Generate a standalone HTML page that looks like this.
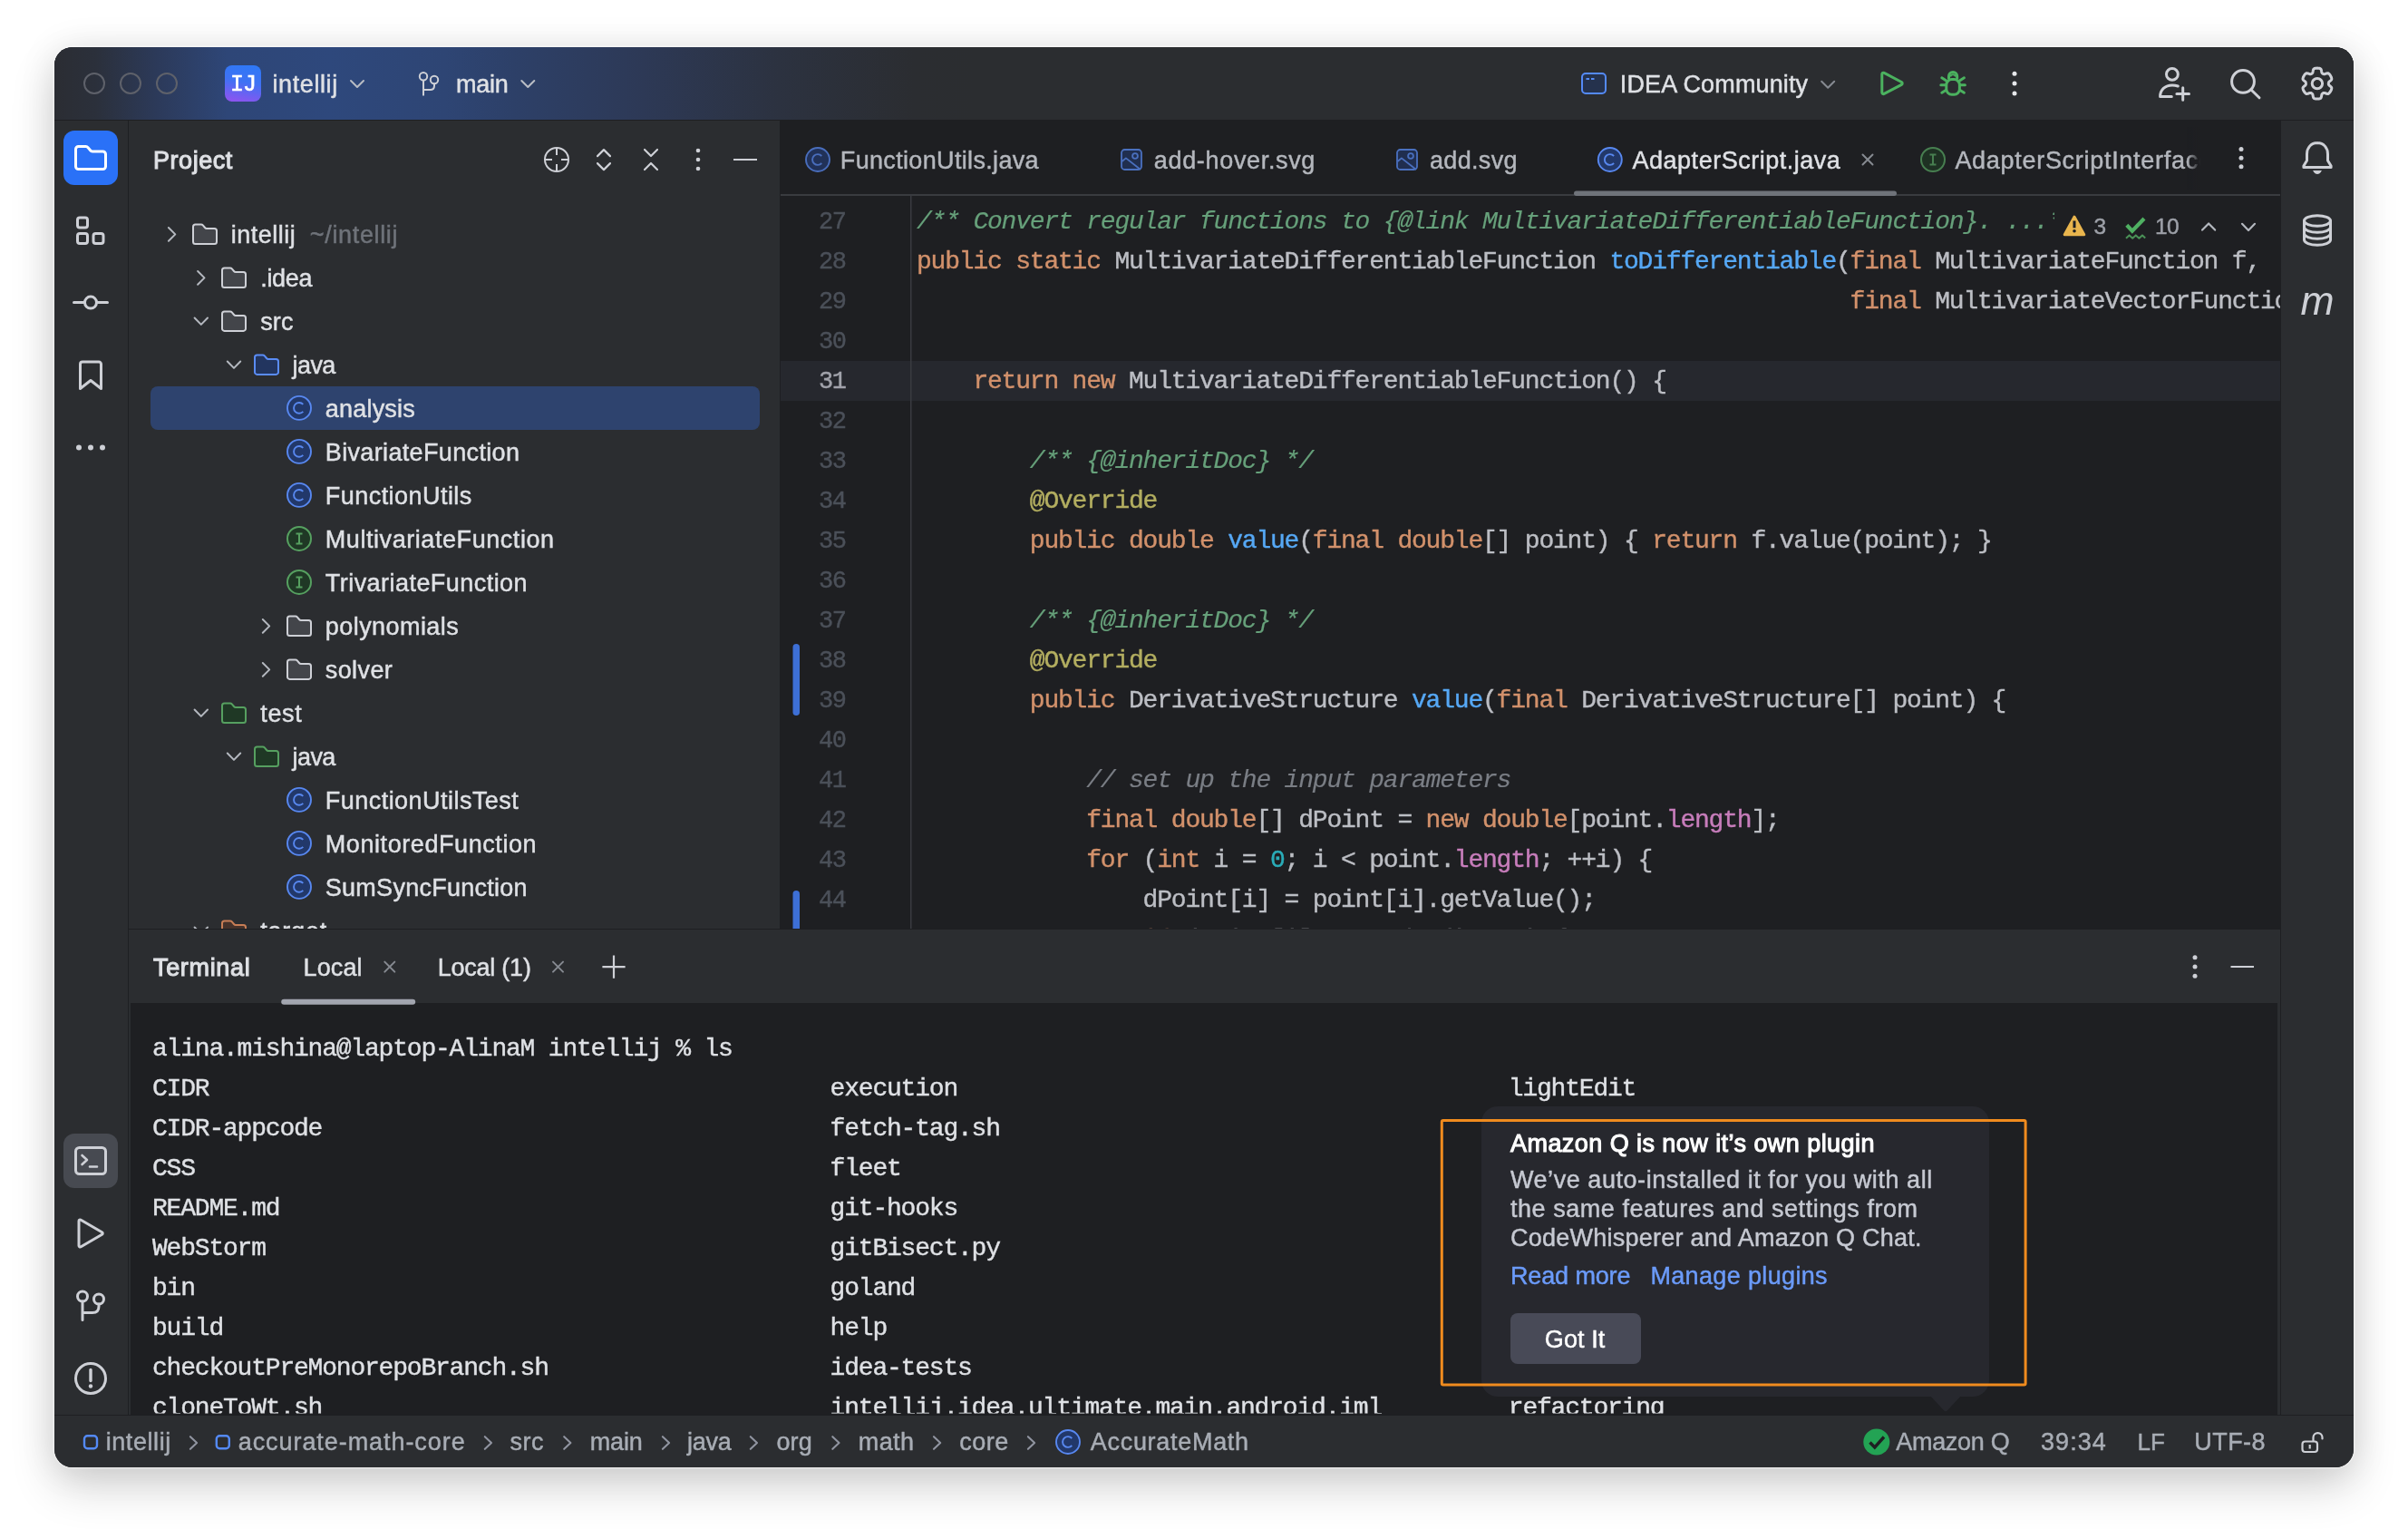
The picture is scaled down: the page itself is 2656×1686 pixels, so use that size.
<!DOCTYPE html>
<html lang="en"><head><meta charset="utf-8"><title>intellij – AdapterScript.java</title>
<style>
html,body{margin:0;padding:0;background:#ffffff;}
body{width:2656px;height:1686px;position:relative;overflow:hidden;font-family:"Liberation Sans",sans-serif;}
#shadow{position:absolute;left:60px;top:52px;width:2536px;height:1566px;border-radius:20px;background:#2b2d30;
 box-shadow:0 0 0 1.5px rgba(255,255,255,0.45),0 22px 50px 0 rgba(0,0,0,0.16),0 2px 40px 0 rgba(0,0,0,0.10);}
svg{position:absolute;left:0;top:0;will-change:transform;font-family:"Liberation Sans",sans-serif;}
svg text{white-space:pre;}
</style></head><body>
<div id="shadow"></div>
<svg width="2656" height="1686" viewBox="0 0 2656 1686">
<defs>
<clipPath id="win"><rect x="60" y="52" width="2536" height="1566" rx="20"/></clipPath>
<linearGradient id="tb" x1="60" y1="0" x2="2596" y2="0" gradientUnits="userSpaceOnUse"><stop offset="0" stop-color="#2b2d33"/><stop offset="0.018" stop-color="#2b303b"/><stop offset="0.045" stop-color="#2c3a5a"/><stop offset="0.075" stop-color="#2e4677"/><stop offset="0.12" stop-color="#2e487c"/><stop offset="0.17" stop-color="#2e4574"/><stop offset="0.20" stop-color="#2d4068"/><stop offset="0.256" stop-color="#2d3956"/><stop offset="0.315" stop-color="#2c3240"/><stop offset="0.374" stop-color="#2b2d31"/><stop offset="0.40" stop-color="#2b2d30"/><stop offset="1" stop-color="#2b2d30"/></linearGradient>
<linearGradient id="ij" x1="0.6" y1="0" x2="0.4" y2="1"><stop offset="0" stop-color="#2f78f6"/><stop offset="0.45" stop-color="#3f72f4"/><stop offset="1" stop-color="#8a55f0"/></linearGradient>
<linearGradient id="tabfade" x1="2412" y1="0" x2="2427" y2="0" gradientUnits="userSpaceOnUse"><stop offset="0" stop-color="#1e1f22" stop-opacity="0"/><stop offset="1" stop-color="#1e1f22" stop-opacity="1"/></linearGradient>
<clipPath id="edclip"><rect x="861" y="216" width="1654" height="808"/></clipPath>
<clipPath id="l27clip"><rect x="861" y="216" width="1405" height="60"/></clipPath>
<clipPath id="treeclip"><rect x="142" y="216" width="718" height="808"/></clipPath>
<clipPath id="termclip"><rect x="144" y="1106" width="2368" height="452.6"/></clipPath>
</defs>
<g clip-path="url(#win)">
<rect x="60" y="52" width="2536" height="1566" fill="#2b2d30" />
<rect x="60" y="52" width="2536" height="80" fill="url(#tb)" />
<rect x="60" y="132" width="2536" height="1" fill="#1e1f22" />
<rect x="861" y="133" width="1654" height="891" fill="#1e1f22" />
<rect x="141" y="133" width="1" height="1427" fill="#1e1f22" />
<rect x="2515" y="133" width="1" height="1427" fill="#1e1f22" />
<rect x="860" y="133" width="1" height="891" fill="#1e1f22" />
<rect x="142" y="1024" width="2373" height="1" fill="#1e1f22" />
<rect x="144" y="1106" width="2368" height="454" fill="#1e1f22" />
<rect x="60" y="1560" width="2536" height="1" fill="#1e1f22" />
<circle cx="104" cy="92" r="11" fill="none" stroke="#5e616a" stroke-width="2" />
<circle cx="144" cy="92" r="11" fill="none" stroke="#5e616a" stroke-width="2" />
<circle cx="184" cy="92" r="11" fill="none" stroke="#5e616a" stroke-width="2" />
<rect x="248" y="72" width="40" height="40" fill="url(#ij)" rx="8" />
<text x="268" y="100.3" font-size="25" fill="#ffffff" font-family='"Liberation Mono", monospace' text-anchor="middle" letter-spacing="-1" stroke="#ffffff" stroke-width="0.6" >IJ</text>
<text x="300.4" y="101.8" font-size="27" fill="#dfe1e5" textLength="71.8" lengthAdjust="spacing" stroke="#dfe1e5" stroke-width="0.45" >intellij</text>
<path d="M387 89.0L394 96.0L401 89.0" stroke="#b8bcc4" stroke-width="2" fill="none" stroke-linecap="round" stroke-linejoin="round" />
<circle cx="467" cy="84.3" r="4.2" fill="none" stroke="#ced0d6" stroke-width="2" />
<circle cx="479" cy="88" r="4.2" fill="none" stroke="#ced0d6" stroke-width="2" />
<path d="M467 88.5V105.5 M479 92.2V94.4c0 3-1.5 4.5-4.5 4.5H467" stroke="#ced0d6" stroke-width="2" fill="none" stroke-linecap="butt" stroke-linejoin="round" />
<text x="503" y="101.8" font-size="27" fill="#dfe1e5" textLength="57.8" lengthAdjust="spacing" stroke="#dfe1e5" stroke-width="0.45" >main</text>
<path d="M575.3 89.0L582.3 96.0L589.3 89.0" stroke="#b8bcc4" stroke-width="2" fill="none" stroke-linecap="round" stroke-linejoin="round" />
<rect x="1745" y="81" width="26" height="22" fill="#25324d" rx="4" stroke="#548af7" stroke-width="2" />
<path d="M1749.5 87H1753 M1755 87H1758.5" stroke="#548af7" stroke-width="2" fill="none" stroke-linecap="butt" stroke-linejoin="round" />
<text x="1786.8" y="102" font-size="27" fill="#dfe1e5" textLength="207.3" lengthAdjust="spacing" stroke="#dfe1e5" stroke-width="0.45" >IDEA Community</text>
<path d="M2009.2 89.7L2016.2 96.7L2023.2 89.7" stroke="#868a91" stroke-width="2" fill="none" stroke-linecap="round" stroke-linejoin="round" />
<path d="M2075.8 81.8V102a1.6 1.6 0 0 0 2.4 1.4L2097.4 93.3a1.6 1.6 0 0 0 0-2.8L2078.2 80.4a1.6 1.6 0 0 0-2.4 1.4Z" stroke="#4bb25f" stroke-width="3" fill="none" stroke-linecap="round" stroke-linejoin="round" />
<rect x="2146.8" y="87.6" width="14.6" height="16.6" fill="none" rx="6" stroke="#4bb25f" stroke-width="3" />
<path d="M2149.5 87.6V84a4.6 4.6 0 0 1 9.2 0V87.6" stroke="#4bb25f" stroke-width="3" fill="none" stroke-linecap="butt" stroke-linejoin="round" />
<path d="M2151.2 84.6a3 3 0 0 1 5.8 0" stroke="#4bb25f" stroke-width="2" fill="none" stroke-linecap="butt" stroke-linejoin="round" />
<path d="M2141.8 85.8L2146.4 88.7 M2166.4 85.8L2161.8 88.7 M2140.8 93.8H2146 M2162.2 93.8H2167.4 M2141.8 102.2L2146.6 99.3 M2166.4 102.2L2161.6 99.3" stroke="#4bb25f" stroke-width="3" fill="none" stroke-linecap="round" stroke-linejoin="round" />
<circle cx="2222" cy="81.3" r="2.5" fill="#e6e7ea" />
<circle cx="2222" cy="92.1" r="2.5" fill="#e6e7ea" />
<circle cx="2222" cy="102.89999999999999" r="2.5" fill="#e6e7ea" />
<circle cx="2395.9" cy="81.9" r="6.4" fill="none" stroke="#ced0d6" stroke-width="3" />
<path d="M2402.3 95C2400.4 94.3 2398.3 93.9 2396 93.9C2388 93.9 2382.6 99 2382.6 106.6H2395.3" stroke="#ced0d6" stroke-width="3" fill="none" stroke-linecap="round" stroke-linejoin="round" />
<path d="M2400.9 103.5H2414.5 M2407.7 96.8V110.3" stroke="#ced0d6" stroke-width="3" fill="none" stroke-linecap="round" stroke-linejoin="round" />
<circle cx="2474" cy="89.9" r="12.4" fill="none" stroke="#ced0d6" stroke-width="3" />
<path d="M2483 99L2492 107.8" stroke="#ced0d6" stroke-width="3" fill="none" stroke-linecap="round" stroke-linejoin="round" />
<path d="M2555.9 75.1L2556.6 75.2L2557.4 75.2L2558.1 75.3L2558.8 75.5L2559.5 75.8L2560.1 76.5L2560.5 77.7L2560.7 79.0L2560.9 80.0L2561.2 80.6L2561.7 81.0L2562.1 81.3L2562.6 81.6L2563.2 81.7L2563.8 81.8L2564.8 81.5L2566.1 80.9L2567.3 80.7L2568.2 80.8L2568.8 81.3L2569.3 81.8L2569.8 82.4L2570.2 83.0L2570.6 83.6L2570.9 84.3L2571.3 84.9L2571.5 85.6L2571.7 86.3L2571.8 87.1L2571.5 87.9L2570.7 88.8L2569.6 89.7L2568.8 90.4L2568.5 91.0L2568.4 91.6L2568.3 92.1L2568.4 92.6L2568.5 93.2L2568.8 93.8L2569.6 94.5L2570.7 95.4L2571.5 96.3L2571.8 97.1L2571.7 97.9L2571.5 98.6L2571.3 99.3L2570.9 99.9L2570.6 100.6L2570.2 101.2L2569.8 101.8L2569.3 102.4L2568.8 102.9L2568.2 103.4L2567.3 103.5L2566.1 103.3L2564.8 102.7L2563.8 102.4L2563.2 102.5L2562.6 102.6L2562.1 102.9L2561.7 103.2L2561.2 103.6L2560.9 104.2L2560.7 105.2L2560.5 106.5L2560.1 107.7L2559.5 108.4L2558.8 108.7L2558.1 108.9L2557.4 109.0L2556.6 109.0L2555.9 109.0L2555.2 109.0L2554.4 109.0L2553.7 108.9L2553.0 108.7L2552.3 108.4L2551.7 107.7L2551.3 106.5L2551.1 105.2L2550.9 104.2L2550.6 103.6L2550.1 103.2L2549.7 102.9L2549.2 102.6L2548.6 102.5L2548.0 102.4L2547.0 102.7L2545.7 103.3L2544.5 103.5L2543.6 103.4L2543.0 102.9L2542.5 102.4L2542.0 101.8L2541.6 101.2L2541.2 100.6L2540.9 99.9L2540.5 99.3L2540.3 98.6L2540.1 97.9L2540.0 97.1L2540.3 96.3L2541.1 95.4L2542.2 94.5L2543.0 93.8L2543.3 93.2L2543.4 92.6L2543.5 92.1L2543.4 91.6L2543.3 91.0L2543.0 90.4L2542.2 89.7L2541.1 88.8L2540.3 87.9L2540.0 87.1L2540.1 86.3L2540.3 85.6L2540.5 84.9L2540.9 84.3L2541.2 83.6L2541.6 83.0L2542.0 82.4L2542.5 81.8L2543.0 81.3L2543.6 80.8L2544.5 80.7L2545.7 80.9L2547.0 81.5L2548.0 81.8L2548.6 81.7L2549.2 81.6L2549.7 81.3L2550.1 81.0L2550.6 80.6L2550.9 80.0L2551.1 79.0L2551.3 77.7L2551.7 76.5L2552.3 75.8L2553.0 75.5L2553.7 75.3L2554.4 75.2L2555.2 75.2Z" stroke="#ced0d6" stroke-width="3" fill="none" stroke-linecap="round" stroke-linejoin="round" />
<circle cx="2555.9" cy="92.1" r="5.7" fill="none" stroke="#ced0d6" stroke-width="3" />
<rect x="70" y="144" width="60" height="60" fill="#2a71f7" rx="12" />
<path d="M83.5 164.5a3 3 0 0 1 3-3h8.2a3 3 0 0 1 2.3 1.1l2.6 3.2a3 3 0 0 0 2.3 1.1H113.5a3 3 0 0 1 3 3V183.5a3 3 0 0 1-3 3H86.5a3 3 0 0 1-3-3Z" stroke="#ffffff" stroke-width="3" fill="none" stroke-linecap="round" stroke-linejoin="round" />
<rect x="85.5" y="240" width="11" height="11" fill="none" rx="2.5" stroke="#ced0d6" stroke-width="3" />
<rect x="85.5" y="257.5" width="11" height="11" fill="none" rx="2.5" stroke="#ced0d6" stroke-width="3" />
<rect x="103" y="257.5" width="11" height="11" fill="none" rx="2.5" stroke="#ced0d6" stroke-width="3" />
<circle cx="100" cy="333.6" r="6.5" fill="none" stroke="#ced0d6" stroke-width="3" />
<path d="M81.5 333.6H93.5 M106.5 333.6H118.5" stroke="#ced0d6" stroke-width="3" fill="none" stroke-linecap="round" stroke-linejoin="round" />
<path d="M88.5 401.5a2.5 2.5 0 0 1 2.5-2.5h18a2.5 2.5 0 0 1 2.5 2.5V428.5L100 419.5L88.5 428.5Z" stroke="#ced0d6" stroke-width="3" fill="none" stroke-linecap="round" stroke-linejoin="round" />
<circle cx="87" cy="493.6" r="3" fill="#ced0d6" />
<circle cx="100" cy="493.6" r="3" fill="#ced0d6" />
<circle cx="113" cy="493.6" r="3" fill="#ced0d6" />
<rect x="70" y="1250" width="60" height="60" fill="#474a51" rx="12" />
<rect x="83.5" y="1265.5" width="33" height="29" fill="none" rx="4" stroke="#ced0d6" stroke-width="3" />
<path d="M90.5 1274L96 1279L90.5 1284 M99 1286.5H107" stroke="#ced0d6" stroke-width="2.6" fill="none" stroke-linecap="round" stroke-linejoin="round" />
<path d="M87 1346.5V1373.5a1.5 1.5 0 0 0 2.3 1.3L112.5 1361.3a1.5 1.5 0 0 0 0-2.6L89.3 1345.2a1.5 1.5 0 0 0-2.3 1.3Z" stroke="#ced0d6" stroke-width="3" fill="none" stroke-linecap="round" stroke-linejoin="round" />
<circle cx="91" cy="1429.5" r="5.5" fill="none" stroke="#ced0d6" stroke-width="3" />
<circle cx="109" cy="1432.5" r="5.5" fill="none" stroke="#ced0d6" stroke-width="3" />
<path d="M91 1435V1455.5 M109 1438v2.6c0 4.6-2.4 7-7 7H91" stroke="#ced0d6" stroke-width="3" fill="none" stroke-linecap="round" stroke-linejoin="round" />
<circle cx="100" cy="1520" r="16.5" fill="none" stroke="#ced0d6" stroke-width="3" />
<path d="M100 1510.5V1522.5" stroke="#ced0d6" stroke-width="3.4" fill="none" stroke-linecap="round" stroke-linejoin="round" />
<circle cx="100" cy="1528.5" r="2.2" fill="#ced0d6" />
<text x="169" y="185.8" font-size="27" fill="#dfe1e5" textLength="87.3" lengthAdjust="spacing" stroke="#dfe1e5" stroke-width="1.05" >Project</text>
<circle cx="614" cy="176" r="13" fill="none" stroke="#ced0d6" stroke-width="2" />
<path d="M614 163V171 M614 181V189 M601 176H609 M619 176H627" stroke="#ced0d6" stroke-width="2" fill="none" stroke-linecap="butt" stroke-linejoin="round" />
<path d="M659 172.1L666 165.1L673 172.1" stroke="#ced0d6" stroke-width="2.2" fill="none" stroke-linecap="round" stroke-linejoin="round" />
<path d="M659 180.1L666 187.1L673 180.1" stroke="#ced0d6" stroke-width="2.2" fill="none" stroke-linecap="round" stroke-linejoin="round" />
<path d="M711 165.0L718 172.0L725 165.0" stroke="#ced0d6" stroke-width="2.2" fill="none" stroke-linecap="round" stroke-linejoin="round" />
<path d="M711 187.0L718 180.0L725 187.0" stroke="#ced0d6" stroke-width="2.2" fill="none" stroke-linecap="round" stroke-linejoin="round" />
<circle cx="770" cy="166" r="2.3" fill="#ced0d6" />
<circle cx="770" cy="176" r="2.3" fill="#ced0d6" />
<circle cx="770" cy="186" r="2.3" fill="#ced0d6" />
<line x1="809" y1="176" x2="835" y2="176" stroke="#ced0d6" stroke-width="2.2" stroke-linecap="butt" />
<g clip-path="url(#treeclip)">
<rect x="166" y="426" width="672" height="48" fill="#2e436e" rx="8" />
<path d="M185.9 250.99999999999997L193.29999999999998 258.4L185.9 265.79999999999995" stroke="#b4b8bf" stroke-width="2" fill="none" stroke-linecap="round" stroke-linejoin="round" />
<path d="M213 249.89999999999998a2.5 2.5 0 0 1 2.5-2.5h6.3a2.5 2.5 0 0 1 2 .9l2.2 2.7a2.5 2.5 0 0 0 2 .9H236.5a2.5 2.5 0 0 1 2.5 2.5V266.4a2.5 2.5 0 0 1-2.5 2.5H215.5a2.5 2.5 0 0 1-2.5-2.5Z" stroke="#ced0d6" stroke-width="2" fill="#43454a" stroke-linecap="round" stroke-linejoin="round" />
<text x="254.8" y="267.79999999999995" font-size="27" fill="#dfe1e5" textLength="71.0" lengthAdjust="spacing" stroke="#dfe1e5" stroke-width="0.45" >intellij</text>
<text x="341.8" y="267.79999999999995" font-size="27" fill="#6f737a" textLength="96.7" lengthAdjust="spacing" stroke="#6f737a" stroke-width="0.45" >~/intellij</text>
<path d="M218.10000000000002 299.0L225.5 306.4L218.10000000000002 313.79999999999995" stroke="#b4b8bf" stroke-width="2" fill="none" stroke-linecap="round" stroke-linejoin="round" />
<path d="M245 297.9a2.5 2.5 0 0 1 2.5-2.5h6.3a2.5 2.5 0 0 1 2 .9l2.2 2.7a2.5 2.5 0 0 0 2 .9H268.5a2.5 2.5 0 0 1 2.5 2.5V314.4a2.5 2.5 0 0 1-2.5 2.5H247.5a2.5 2.5 0 0 1-2.5-2.5Z" stroke="#ced0d6" stroke-width="2" fill="#43454a" stroke-linecap="round" stroke-linejoin="round" />
<text x="287.2" y="315.79999999999995" font-size="27" fill="#dfe1e5" textLength="57.3" lengthAdjust="spacing" stroke="#dfe1e5" stroke-width="0.45" >.idea</text>
<path d="M214.60000000000002 350.5L221.8 357.9L229.0 350.5" stroke="#b4b8bf" stroke-width="2" fill="none" stroke-linecap="round" stroke-linejoin="round" />
<path d="M245 345.9a2.5 2.5 0 0 1 2.5-2.5h6.3a2.5 2.5 0 0 1 2 .9l2.2 2.7a2.5 2.5 0 0 0 2 .9H268.5a2.5 2.5 0 0 1 2.5 2.5V362.4a2.5 2.5 0 0 1-2.5 2.5H247.5a2.5 2.5 0 0 1-2.5-2.5Z" stroke="#ced0d6" stroke-width="2" fill="#43454a" stroke-linecap="round" stroke-linejoin="round" />
<text x="287.2" y="363.79999999999995" font-size="27" fill="#dfe1e5" textLength="36.2" lengthAdjust="spacing" stroke="#dfe1e5" stroke-width="0.45" >src</text>
<path d="M250.8 398.5L258 405.9L265.2 398.5" stroke="#b4b8bf" stroke-width="2" fill="none" stroke-linecap="round" stroke-linejoin="round" />
<path d="M281 393.9a2.5 2.5 0 0 1 2.5-2.5h6.3a2.5 2.5 0 0 1 2 .9l2.2 2.7a2.5 2.5 0 0 0 2 .9H304.5a2.5 2.5 0 0 1 2.5 2.5V410.4a2.5 2.5 0 0 1-2.5 2.5H283.5a2.5 2.5 0 0 1-2.5-2.5Z" stroke="#5a8cf5" stroke-width="2" fill="#22355f" stroke-linecap="round" stroke-linejoin="round" />
<text x="322.6" y="411.79999999999995" font-size="27" fill="#dfe1e5" textLength="47.8" lengthAdjust="spacing" stroke="#dfe1e5" stroke-width="0.45" >java</text>
<circle cx="330" cy="449.9" r="13" fill="#22386a" stroke="#5888f0" stroke-width="1.9" />
<path d="M334.3 445.9a5.9 5.9 0 1 0 0 8.0" stroke="#5888f0" stroke-width="1.9" fill="none" stroke-linecap="butt" stroke-linejoin="round" />
<text x="358.8" y="459.79999999999995" font-size="27" fill="#dfe1e5" textLength="98.9" lengthAdjust="spacing" stroke="#dfe1e5" stroke-width="0.45" >analysis</text>
<circle cx="330" cy="497.9" r="13" fill="#22386a" stroke="#5888f0" stroke-width="1.9" />
<path d="M334.3 493.9a5.9 5.9 0 1 0 0 8.0" stroke="#5888f0" stroke-width="1.9" fill="none" stroke-linecap="butt" stroke-linejoin="round" />
<text x="358.8" y="507.79999999999995" font-size="27" fill="#dfe1e5" textLength="214.2" lengthAdjust="spacing" stroke="#dfe1e5" stroke-width="0.45" >BivariateFunction</text>
<circle cx="330" cy="545.9" r="13" fill="#22386a" stroke="#5888f0" stroke-width="1.9" />
<path d="M334.3 541.9a5.9 5.9 0 1 0 0 8.0" stroke="#5888f0" stroke-width="1.9" fill="none" stroke-linecap="butt" stroke-linejoin="round" />
<text x="358.8" y="555.8" font-size="27" fill="#dfe1e5" textLength="161.5" lengthAdjust="spacing" stroke="#dfe1e5" stroke-width="0.45" >FunctionUtils</text>
<circle cx="330" cy="593.9" r="13" fill="#1f3825" stroke="#56a060" stroke-width="2" />
<path d="M326.5 588.4H333.5 M330 588.4V599.4 M326.5 599.4H333.5" stroke="#56a060" stroke-width="2" fill="none" stroke-linecap="butt" stroke-linejoin="round" />
<text x="358.8" y="603.8" font-size="27" fill="#dfe1e5" textLength="252.3" lengthAdjust="spacing" stroke="#dfe1e5" stroke-width="0.45" >MultivariateFunction</text>
<circle cx="330" cy="641.9" r="13" fill="#1f3825" stroke="#56a060" stroke-width="2" />
<path d="M326.5 636.4H333.5 M330 636.4V647.4 M326.5 647.4H333.5" stroke="#56a060" stroke-width="2" fill="none" stroke-linecap="butt" stroke-linejoin="round" />
<text x="358.8" y="651.8" font-size="27" fill="#dfe1e5" textLength="222.8" lengthAdjust="spacing" stroke="#dfe1e5" stroke-width="0.45" >TrivariateFunction</text>
<path d="M289.8 683.0L297.2 690.4L289.8 697.8" stroke="#b4b8bf" stroke-width="2" fill="none" stroke-linecap="round" stroke-linejoin="round" />
<path d="M317 681.9a2.5 2.5 0 0 1 2.5-2.5h6.3a2.5 2.5 0 0 1 2 .9l2.2 2.7a2.5 2.5 0 0 0 2 .9H340.5a2.5 2.5 0 0 1 2.5 2.5V698.4a2.5 2.5 0 0 1-2.5 2.5H319.5a2.5 2.5 0 0 1-2.5-2.5Z" stroke="#ced0d6" stroke-width="2" fill="#43454a" stroke-linecap="round" stroke-linejoin="round" />
<text x="358.8" y="699.8" font-size="27" fill="#dfe1e5" textLength="146.9" lengthAdjust="spacing" stroke="#dfe1e5" stroke-width="0.45" >polynomials</text>
<path d="M289.8 731.0L297.2 738.4L289.8 745.8" stroke="#b4b8bf" stroke-width="2" fill="none" stroke-linecap="round" stroke-linejoin="round" />
<path d="M317 729.9a2.5 2.5 0 0 1 2.5-2.5h6.3a2.5 2.5 0 0 1 2 .9l2.2 2.7a2.5 2.5 0 0 0 2 .9H340.5a2.5 2.5 0 0 1 2.5 2.5V746.4a2.5 2.5 0 0 1-2.5 2.5H319.5a2.5 2.5 0 0 1-2.5-2.5Z" stroke="#ced0d6" stroke-width="2" fill="#43454a" stroke-linecap="round" stroke-linejoin="round" />
<text x="358.8" y="747.8" font-size="27" fill="#dfe1e5" textLength="74.0" lengthAdjust="spacing" stroke="#dfe1e5" stroke-width="0.45" >solver</text>
<path d="M214.60000000000002 782.4999999999999L221.8 789.9L229.0 782.4999999999999" stroke="#b4b8bf" stroke-width="2" fill="none" stroke-linecap="round" stroke-linejoin="round" />
<path d="M245 777.9a2.5 2.5 0 0 1 2.5-2.5h6.3a2.5 2.5 0 0 1 2 .9l2.2 2.7a2.5 2.5 0 0 0 2 .9H268.5a2.5 2.5 0 0 1 2.5 2.5V794.4a2.5 2.5 0 0 1-2.5 2.5H247.5a2.5 2.5 0 0 1-2.5-2.5Z" stroke="#56a060" stroke-width="2" fill="#1f3825" stroke-linecap="round" stroke-linejoin="round" />
<text x="287.2" y="795.8" font-size="27" fill="#dfe1e5" textLength="45.6" lengthAdjust="spacing" stroke="#dfe1e5" stroke-width="0.45" >test</text>
<path d="M250.8 830.4999999999999L258 837.9L265.2 830.4999999999999" stroke="#b4b8bf" stroke-width="2" fill="none" stroke-linecap="round" stroke-linejoin="round" />
<path d="M281 825.9a2.5 2.5 0 0 1 2.5-2.5h6.3a2.5 2.5 0 0 1 2 .9l2.2 2.7a2.5 2.5 0 0 0 2 .9H304.5a2.5 2.5 0 0 1 2.5 2.5V842.4a2.5 2.5 0 0 1-2.5 2.5H283.5a2.5 2.5 0 0 1-2.5-2.5Z" stroke="#56a060" stroke-width="2" fill="#1f3825" stroke-linecap="round" stroke-linejoin="round" />
<text x="322.6" y="843.8" font-size="27" fill="#dfe1e5" textLength="47.8" lengthAdjust="spacing" stroke="#dfe1e5" stroke-width="0.45" >java</text>
<circle cx="330" cy="881.9" r="13" fill="#22386a" stroke="#5888f0" stroke-width="1.9" />
<path d="M334.3 877.9a5.9 5.9 0 1 0 0 8.0" stroke="#5888f0" stroke-width="1.9" fill="none" stroke-linecap="butt" stroke-linejoin="round" />
<text x="358.8" y="891.8" font-size="27" fill="#dfe1e5" textLength="213.0" lengthAdjust="spacing" stroke="#dfe1e5" stroke-width="0.45" >FunctionUtilsTest</text>
<circle cx="330" cy="929.9" r="13" fill="#22386a" stroke="#5888f0" stroke-width="1.9" />
<path d="M334.3 925.9a5.9 5.9 0 1 0 0 8.0" stroke="#5888f0" stroke-width="1.9" fill="none" stroke-linecap="butt" stroke-linejoin="round" />
<text x="358.8" y="939.8" font-size="27" fill="#dfe1e5" textLength="232.8" lengthAdjust="spacing" stroke="#dfe1e5" stroke-width="0.45" >MonitoredFunction</text>
<circle cx="330" cy="977.9" r="13" fill="#22386a" stroke="#5888f0" stroke-width="1.9" />
<path d="M334.3 973.9a5.9 5.9 0 1 0 0 8.0" stroke="#5888f0" stroke-width="1.9" fill="none" stroke-linecap="butt" stroke-linejoin="round" />
<text x="358.8" y="987.8" font-size="27" fill="#dfe1e5" textLength="222.8" lengthAdjust="spacing" stroke="#dfe1e5" stroke-width="0.45" >SumSyncFunction</text>
<path d="M214.60000000000002 1022.5L221.8 1029.9L229.0 1022.5" stroke="#b4b8bf" stroke-width="2" fill="none" stroke-linecap="round" stroke-linejoin="round" />
<path d="M245 1017.9000000000001a2.5 2.5 0 0 1 2.5-2.5h6.3a2.5 2.5 0 0 1 2 .9l2.2 2.7a2.5 2.5 0 0 0 2 .9H268.5a2.5 2.5 0 0 1 2.5 2.5V1034.4a2.5 2.5 0 0 1-2.5 2.5H247.5a2.5 2.5 0 0 1-2.5-2.5Z" stroke="#c77d55" stroke-width="2" fill="#45322b" stroke-linecap="round" stroke-linejoin="round" />
<text x="287.2" y="1035.8000000000002" font-size="27" fill="#dfe1e5" textLength="73.0" lengthAdjust="spacing" stroke="#dfe1e5" stroke-width="0.45" >target</text>
</g>
<g opacity="0.75">
<circle cx="902" cy="176" r="13" fill="#22386a" stroke="#5888f0" stroke-width="1.9" />
<path d="M906.3 172.0a5.9 5.9 0 1 0 0 8.0" stroke="#5888f0" stroke-width="1.9" fill="none" stroke-linecap="butt" stroke-linejoin="round" />
</g>
<text x="926.8" y="185.5" font-size="27" fill="#b4b7bd" textLength="218.8" lengthAdjust="spacing" stroke="#b4b7bd" stroke-width="0.45" >FunctionUtils.java</text>
<g opacity="0.75">
<rect x="1237" y="165" width="22" height="22" fill="#22355f" rx="3.5" stroke="#5a8cf5" stroke-width="1.8" />
<circle cx="1252" cy="172" r="2.9" fill="none" stroke="#5a8cf5" stroke-width="1.8" />
<path d="M1237.5 178L1241.9 174.4L1258 187" stroke="#5a8cf5" stroke-width="1.8" fill="none" stroke-linecap="butt" stroke-linejoin="round" />
</g>
<text x="1272.8" y="185.5" font-size="27" fill="#b4b7bd" textLength="177.6" lengthAdjust="spacing" stroke="#b4b7bd" stroke-width="0.45" >add-hover.svg</text>
<g opacity="0.75">
<rect x="1541" y="165" width="22" height="22" fill="#22355f" rx="3.5" stroke="#5a8cf5" stroke-width="1.8" />
<circle cx="1556" cy="172" r="2.9" fill="none" stroke="#5a8cf5" stroke-width="1.8" />
<path d="M1541.5 178L1545.9 174.4L1562 187" stroke="#5a8cf5" stroke-width="1.8" fill="none" stroke-linecap="butt" stroke-linejoin="round" />
</g>
<text x="1577" y="185.5" font-size="27" fill="#b4b7bd" textLength="96.5" lengthAdjust="spacing" stroke="#b4b7bd" stroke-width="0.45" >add.svg</text>
<circle cx="1775.8" cy="176" r="13" fill="#22386a" stroke="#5888f0" stroke-width="1.9" />
<path d="M1780.1 172.0a5.9 5.9 0 1 0 0 8.0" stroke="#5888f0" stroke-width="1.9" fill="none" stroke-linecap="butt" stroke-linejoin="round" />
<text x="1800.5" y="185.5" font-size="27" fill="#dfe1e5" textLength="229.3" lengthAdjust="spacing" stroke="#dfe1e5" stroke-width="0.45" >AdapterScript.java</text>
<path d="M2054.5 170.5L2065.5 181.5 M2065.5 170.5L2054.5 181.5" stroke="#868a91" stroke-width="2" fill="none" stroke-linecap="round" stroke-linejoin="round" />
<g opacity="0.75">
<circle cx="2132" cy="176" r="13" fill="#1f3825" stroke="#56a060" stroke-width="2" />
<path d="M2128.5 170.5H2135.5 M2132 170.5V181.5 M2128.5 181.5H2135.5" stroke="#56a060" stroke-width="2" fill="none" stroke-linecap="butt" stroke-linejoin="round" />
</g>
<text x="2156.4" y="185.5" font-size="27" fill="#b4b7bd" textLength="344" lengthAdjust="spacing" stroke="#b4b7bd" stroke-width="0.45" >AdapterScriptInterface.java</text>
<rect x="2400" y="140" width="28" height="70" fill="url(#tabfade)" />
<rect x="2427" y="140" width="88" height="70" fill="#1e1f22" />
<circle cx="2472" cy="164.6" r="2.5" fill="#ced0d6" />
<circle cx="2472" cy="174.2" r="2.5" fill="#ced0d6" />
<circle cx="2472" cy="183.79999999999998" r="2.5" fill="#ced0d6" />
<rect x="861" y="214" width="1654" height="2" fill="#393b40" />
<rect x="1736" y="210.5" width="356" height="5.5" fill="#6f737a" rx="2.75" />
<rect x="861" y="398" width="1654" height="44" fill="#26282e" />
<rect x="1004" y="216" width="1.5" height="808" fill="#393b40" />
<rect x="874.5" y="710" width="7.5" height="79" fill="#3d6fd6" rx="3.75" />
<rect x="874.5" y="982" width="7.5" height="60" fill="#3d6fd6" rx="3.75" clip-path="url(#edclip)"/>
<g clip-path="url(#edclip)">
<text x="932.6" y="252" font-size="27" letter-spacing="-1.4" text-anchor="end" fill="#4b5059" stroke="#4b5059" stroke-width="0.4" font-family='"Liberation Mono", monospace'>27</text>
<text y="252" font-size="28" letter-spacing="-1.203" xml:space="preserve" stroke-width="0.4" font-family='"Liberation Mono", monospace' clip-path="url(#l27clip)"><tspan x="1011.0" fill="#66a07a" stroke="#66a07a" font-style="italic" stroke-width="0.15">/** Convert regular functions to {@link MultivariateDifferentiableFunction}. ...*/</tspan></text>
<text x="932.6" y="296" font-size="27" letter-spacing="-1.4" text-anchor="end" fill="#4b5059" stroke="#4b5059" stroke-width="0.4" font-family='"Liberation Mono", monospace'>28</text>
<text y="296" font-size="28" letter-spacing="-1.203" xml:space="preserve" stroke-width="0.4" font-family='"Liberation Mono", monospace'><tspan x="1011.0" fill="#d2916b" stroke="#d2916b">public static </tspan><tspan x="1229.4" fill="#bcbec4" stroke="#bcbec4">MultivariateDifferentiableFunction </tspan><tspan x="1775.4" fill="#56a8f5" stroke="#56a8f5">toDifferentiable</tspan><tspan x="2025.0" fill="#bcbec4" stroke="#bcbec4">(</tspan><tspan x="2040.6" fill="#d2916b" stroke="#d2916b">final </tspan><tspan x="2134.2" fill="#bcbec4" stroke="#bcbec4">MultivariateFunction f,</tspan></text>
<text x="932.6" y="340" font-size="27" letter-spacing="-1.4" text-anchor="end" fill="#4b5059" stroke="#4b5059" stroke-width="0.4" font-family='"Liberation Mono", monospace'>29</text>
<text y="340" font-size="28" letter-spacing="-1.203" xml:space="preserve" stroke-width="0.4" font-family='"Liberation Mono", monospace'><tspan x="2040.6" fill="#d2916b" stroke="#d2916b">final </tspan><tspan x="2134.2" fill="#bcbec4" stroke="#bcbec4">MultivariateVectorFunction gradient) {</tspan></text>
<text x="932.6" y="384" font-size="27" letter-spacing="-1.4" text-anchor="end" fill="#4b5059" stroke="#4b5059" stroke-width="0.4" font-family='"Liberation Mono", monospace'>30</text>
<text x="932.6" y="428" font-size="27" letter-spacing="-1.4" text-anchor="end" fill="#a1a3ab" stroke="#a1a3ab" stroke-width="0.4" font-family='"Liberation Mono", monospace'>31</text>
<text y="428" font-size="28" letter-spacing="-1.203" xml:space="preserve" stroke-width="0.4" font-family='"Liberation Mono", monospace'><tspan x="1073.4" fill="#d2916b" stroke="#d2916b">return new </tspan><tspan x="1245.0" fill="#bcbec4" stroke="#bcbec4">MultivariateDifferentiableFunction() {</tspan></text>
<text x="932.6" y="472" font-size="27" letter-spacing="-1.4" text-anchor="end" fill="#4b5059" stroke="#4b5059" stroke-width="0.4" font-family='"Liberation Mono", monospace'>32</text>
<text x="932.6" y="516" font-size="27" letter-spacing="-1.4" text-anchor="end" fill="#4b5059" stroke="#4b5059" stroke-width="0.4" font-family='"Liberation Mono", monospace'>33</text>
<text y="516" font-size="28" letter-spacing="-1.203" xml:space="preserve" stroke-width="0.4" font-family='"Liberation Mono", monospace'><tspan x="1135.8" fill="#66a07a" stroke="#66a07a" font-style="italic" stroke-width="0.15">/** {@inheritDoc} */</tspan></text>
<text x="932.6" y="560" font-size="27" letter-spacing="-1.4" text-anchor="end" fill="#4b5059" stroke="#4b5059" stroke-width="0.4" font-family='"Liberation Mono", monospace'>34</text>
<text y="560" font-size="28" letter-spacing="-1.203" xml:space="preserve" stroke-width="0.4" font-family='"Liberation Mono", monospace'><tspan x="1135.8" fill="#b3ae60" stroke="#b3ae60">@Override</tspan></text>
<text x="932.6" y="604" font-size="27" letter-spacing="-1.4" text-anchor="end" fill="#4b5059" stroke="#4b5059" stroke-width="0.4" font-family='"Liberation Mono", monospace'>35</text>
<text y="604" font-size="28" letter-spacing="-1.203" xml:space="preserve" stroke-width="0.4" font-family='"Liberation Mono", monospace'><tspan x="1135.8" fill="#d2916b" stroke="#d2916b">public double </tspan><tspan x="1354.2" fill="#56a8f5" stroke="#56a8f5">value</tspan><tspan x="1432.2" fill="#bcbec4" stroke="#bcbec4">(</tspan><tspan x="1447.8" fill="#d2916b" stroke="#d2916b">final double</tspan><tspan x="1635.0" fill="#bcbec4" stroke="#bcbec4">[] point) { </tspan><tspan x="1822.2" fill="#d2916b" stroke="#d2916b">return </tspan><tspan x="1931.4" fill="#bcbec4" stroke="#bcbec4">f.value(point); }</tspan></text>
<text x="932.6" y="648" font-size="27" letter-spacing="-1.4" text-anchor="end" fill="#4b5059" stroke="#4b5059" stroke-width="0.4" font-family='"Liberation Mono", monospace'>36</text>
<text x="932.6" y="692" font-size="27" letter-spacing="-1.4" text-anchor="end" fill="#4b5059" stroke="#4b5059" stroke-width="0.4" font-family='"Liberation Mono", monospace'>37</text>
<text y="692" font-size="28" letter-spacing="-1.203" xml:space="preserve" stroke-width="0.4" font-family='"Liberation Mono", monospace'><tspan x="1135.8" fill="#66a07a" stroke="#66a07a" font-style="italic" stroke-width="0.15">/** {@inheritDoc} */</tspan></text>
<text x="932.6" y="736" font-size="27" letter-spacing="-1.4" text-anchor="end" fill="#4b5059" stroke="#4b5059" stroke-width="0.4" font-family='"Liberation Mono", monospace'>38</text>
<text y="736" font-size="28" letter-spacing="-1.203" xml:space="preserve" stroke-width="0.4" font-family='"Liberation Mono", monospace'><tspan x="1135.8" fill="#b3ae60" stroke="#b3ae60">@Override</tspan></text>
<text x="932.6" y="780" font-size="27" letter-spacing="-1.4" text-anchor="end" fill="#4b5059" stroke="#4b5059" stroke-width="0.4" font-family='"Liberation Mono", monospace'>39</text>
<text y="780" font-size="28" letter-spacing="-1.203" xml:space="preserve" stroke-width="0.4" font-family='"Liberation Mono", monospace'><tspan x="1135.8" fill="#d2916b" stroke="#d2916b">public </tspan><tspan x="1245.0" fill="#bcbec4" stroke="#bcbec4">DerivativeStructure </tspan><tspan x="1557.0" fill="#56a8f5" stroke="#56a8f5">value</tspan><tspan x="1635.0" fill="#bcbec4" stroke="#bcbec4">(</tspan><tspan x="1650.6" fill="#d2916b" stroke="#d2916b">final </tspan><tspan x="1744.2" fill="#bcbec4" stroke="#bcbec4">DerivativeStructure[] point) {</tspan></text>
<text x="932.6" y="824" font-size="27" letter-spacing="-1.4" text-anchor="end" fill="#4b5059" stroke="#4b5059" stroke-width="0.4" font-family='"Liberation Mono", monospace'>40</text>
<text x="932.6" y="868" font-size="27" letter-spacing="-1.4" text-anchor="end" fill="#4b5059" stroke="#4b5059" stroke-width="0.4" font-family='"Liberation Mono", monospace'>41</text>
<text y="868" font-size="28" letter-spacing="-1.203" xml:space="preserve" stroke-width="0.4" font-family='"Liberation Mono", monospace'><tspan x="1198.2" fill="#7a7e85" stroke="#7a7e85" font-style="italic" stroke-width="0.15">// set up the input parameters</tspan></text>
<text x="932.6" y="912" font-size="27" letter-spacing="-1.4" text-anchor="end" fill="#4b5059" stroke="#4b5059" stroke-width="0.4" font-family='"Liberation Mono", monospace'>42</text>
<text y="912" font-size="28" letter-spacing="-1.203" xml:space="preserve" stroke-width="0.4" font-family='"Liberation Mono", monospace'><tspan x="1198.2" fill="#d2916b" stroke="#d2916b">final double</tspan><tspan x="1385.4" fill="#bcbec4" stroke="#bcbec4">[] dPoint = </tspan><tspan x="1572.6" fill="#d2916b" stroke="#d2916b">new double</tspan><tspan x="1728.6" fill="#bcbec4" stroke="#bcbec4">[point.</tspan><tspan x="1837.8" fill="#c77dbb" stroke="#c77dbb">length</tspan><tspan x="1931.4" fill="#bcbec4" stroke="#bcbec4">];</tspan></text>
<text x="932.6" y="956" font-size="27" letter-spacing="-1.4" text-anchor="end" fill="#4b5059" stroke="#4b5059" stroke-width="0.4" font-family='"Liberation Mono", monospace'>43</text>
<text y="956" font-size="28" letter-spacing="-1.203" xml:space="preserve" stroke-width="0.4" font-family='"Liberation Mono", monospace'><tspan x="1198.2" fill="#d2916b" stroke="#d2916b">for </tspan><tspan x="1260.6" fill="#bcbec4" stroke="#bcbec4">(</tspan><tspan x="1276.2" fill="#d2916b" stroke="#d2916b">int </tspan><tspan x="1338.6" fill="#bcbec4" stroke="#bcbec4">i = </tspan><tspan x="1401.0" fill="#2aacb8" stroke="#2aacb8">0</tspan><tspan x="1416.6" fill="#bcbec4" stroke="#bcbec4">; i &lt; point.</tspan><tspan x="1603.8" fill="#c77dbb" stroke="#c77dbb">length</tspan><tspan x="1697.4" fill="#bcbec4" stroke="#bcbec4">; ++i) {</tspan></text>
<text x="932.6" y="1000" font-size="27" letter-spacing="-1.4" text-anchor="end" fill="#4b5059" stroke="#4b5059" stroke-width="0.4" font-family='"Liberation Mono", monospace'>44</text>
<text y="1000" font-size="28" letter-spacing="-1.203" xml:space="preserve" stroke-width="0.4" font-family='"Liberation Mono", monospace'><tspan x="1260.6" fill="#bcbec4" stroke="#bcbec4">dPoint[i] = point[i].getValue();</tspan></text>
<text x="932.6" y="1044" font-size="27" letter-spacing="-1.4" text-anchor="end" fill="#4b5059" stroke="#4b5059" stroke-width="0.4" font-family='"Liberation Mono", monospace'>45</text>
<text y="1044" font-size="28" letter-spacing="-1.203" xml:space="preserve" stroke-width="0.4" font-family='"Liberation Mono", monospace'><tspan x="1260.6" fill="#d2916b" stroke="#d2916b">if </tspan><tspan x="1307.4" fill="#bcbec4" stroke="#bcbec4">(point[i].getOrder() &gt; </tspan><tspan x="1666.2" fill="#2aacb8" stroke="#2aacb8">1</tspan><tspan x="1681.8" fill="#bcbec4" stroke="#bcbec4">) {</tspan></text>
</g>
<path d="M2288 239.3L2298.7 258.7H2277.3Z" stroke="#e9b54d" stroke-width="3.2" fill="#e9b54d" stroke-linecap="round" stroke-linejoin="round" />
<path d="M2288 243.5V251.3" stroke="#1e1f22" stroke-width="3" fill="none" stroke-linecap="butt" stroke-linejoin="round" />
<circle cx="2288" cy="254.8" r="1.8" fill="#1e1f22" />
<text x="2309.6" y="257.5" font-size="24.5" fill="#9da0a8" stroke="#9da0a8" stroke-width="0.45" >3</text>
<path d="M2345.8 248.3L2351.8 254.6L2365 241" stroke="#4fb062" stroke-width="4.2" fill="none" stroke-linecap="butt" stroke-linejoin="miter" />
<path d="M2345 262.8l3.6-3.4 3.6 3.4 3.6-3.4 3.6 3.4 3.6-3.4 3.2 3" stroke="#4a9157" stroke-width="2" fill="none" stroke-linecap="butt" stroke-linejoin="round" />
<text x="2377" y="257.5" font-size="24.5" fill="#9da0a8" letter-spacing="-0.6" stroke="#9da0a8" stroke-width="0.45" >10</text>
<path d="M2429.1 253.6L2436.1 246.4L2443.1 253.6" stroke="#b4b8bf" stroke-width="2.2" fill="none" stroke-linecap="round" stroke-linejoin="round" />
<path d="M2473 246.8L2480 254.0L2487 246.8" stroke="#b4b8bf" stroke-width="2.2" fill="none" stroke-linecap="round" stroke-linejoin="round" />
<path d="M2556 157.5c-7 0-11.5 5.5-11.5 12.5v7l-3.6 6v1.5h30.2v-1.5l-3.6-6v-7c0-7-4.5-12.5-11.5-12.5Z" stroke="#ced0d6" stroke-width="3" fill="none" stroke-linecap="round" stroke-linejoin="round" />
<path d="M2551.8 188.8a4.5 4.2 0 0 0 8.4 0Z" stroke="#ced0d6" stroke-width="1" fill="#ced0d6" stroke-linecap="round" stroke-linejoin="round" />
<ellipse cx="2556" cy="243.5" rx="14.5" ry="5.8" fill="none" stroke="#ced0d6" stroke-width="3"/>
<path d="M2541.5 243.5V264.5c0 3.2 6.5 5.8 14.5 5.8s14.5-2.6 14.5-5.8V243.5" stroke="#ced0d6" stroke-width="3" fill="none" stroke-linecap="round" stroke-linejoin="round" />
<path d="M2541.5 250.5c0 3.2 6.5 5.8 14.5 5.8s14.5-2.6 14.5-5.8 M2541.5 257.5c0 3.2 6.5 5.8 14.5 5.8s14.5-2.6 14.5-5.8" stroke="#ced0d6" stroke-width="3" fill="none" stroke-linecap="round" stroke-linejoin="round" />
<text x="2556" y="347" font-size="44.5" fill="#ced0d6" font-style="italic" text-anchor="middle" >m</text>
<text x="169" y="1075.8" font-size="27" fill="#dfe1e5" textLength="106.7" lengthAdjust="spacing" stroke="#dfe1e5" stroke-width="1.05" >Terminal</text>
<text x="334.6" y="1075.8" font-size="27" fill="#dfe1e5" textLength="64.9" lengthAdjust="spacing" stroke="#dfe1e5" stroke-width="0.45" >Local</text>
<path d="M424.3 1060.6L435.3 1071.6 M435.3 1060.6L424.3 1071.6" stroke="#868a91" stroke-width="2" fill="none" stroke-linecap="round" stroke-linejoin="round" />
<text x="482.7" y="1075.8" font-size="27" fill="#dfe1e5" textLength="103.2" lengthAdjust="spacing" stroke="#dfe1e5" stroke-width="0.45" >Local (1)</text>
<path d="M610 1060.6L621 1071.6 M621 1060.6L610 1071.6" stroke="#868a91" stroke-width="2" fill="none" stroke-linecap="round" stroke-linejoin="round" />
<path d="M677 1053.6V1078.8 M664.4 1066.2H689.6" stroke="#ced0d6" stroke-width="2.2" fill="none" stroke-linecap="butt" stroke-linejoin="round" />
<rect x="310.2" y="1101.8" width="148" height="6" fill="#a2a5af" rx="3" />
<circle cx="2421" cy="1055.7" r="2.5" fill="#ced0d6" />
<circle cx="2421" cy="1066" r="2.5" fill="#ced0d6" />
<circle cx="2421" cy="1076.3" r="2.5" fill="#ced0d6" />
<line x1="2460.5" y1="1066" x2="2486" y2="1066" stroke="#ced0d6" stroke-width="2" stroke-linecap="butt" />
<g clip-path="url(#termclip)">
<text x="168.0" y="1163.8" font-size="28" letter-spacing="-1.203" xml:space="preserve" fill="#dfe1e5" stroke="#dfe1e5" stroke-width="0.4" font-family='"Liberation Mono", monospace'>alina.mishina@laptop-AlinaM intellij % ls</text>
<text x="168.0" y="1207.8" font-size="28" letter-spacing="-1.203" xml:space="preserve" fill="#dfe1e5" stroke="#dfe1e5" stroke-width="0.4" font-family='"Liberation Mono", monospace'>CIDR</text>
<text x="168.0" y="1251.8" font-size="28" letter-spacing="-1.203" xml:space="preserve" fill="#dfe1e5" stroke="#dfe1e5" stroke-width="0.4" font-family='"Liberation Mono", monospace'>CIDR-appcode</text>
<text x="168.0" y="1295.8" font-size="28" letter-spacing="-1.203" xml:space="preserve" fill="#dfe1e5" stroke="#dfe1e5" stroke-width="0.4" font-family='"Liberation Mono", monospace'>CSS</text>
<text x="168.0" y="1339.8" font-size="28" letter-spacing="-1.203" xml:space="preserve" fill="#dfe1e5" stroke="#dfe1e5" stroke-width="0.4" font-family='"Liberation Mono", monospace'>README.md</text>
<text x="168.0" y="1383.8" font-size="28" letter-spacing="-1.203" xml:space="preserve" fill="#dfe1e5" stroke="#dfe1e5" stroke-width="0.4" font-family='"Liberation Mono", monospace'>WebStorm</text>
<text x="168.0" y="1427.8" font-size="28" letter-spacing="-1.203" xml:space="preserve" fill="#dfe1e5" stroke="#dfe1e5" stroke-width="0.4" font-family='"Liberation Mono", monospace'>bin</text>
<text x="168.0" y="1471.8" font-size="28" letter-spacing="-1.203" xml:space="preserve" fill="#dfe1e5" stroke="#dfe1e5" stroke-width="0.4" font-family='"Liberation Mono", monospace'>build</text>
<text x="168.0" y="1515.8" font-size="28" letter-spacing="-1.203" xml:space="preserve" fill="#dfe1e5" stroke="#dfe1e5" stroke-width="0.4" font-family='"Liberation Mono", monospace'>checkoutPreMonorepoBranch.sh</text>
<text x="168.0" y="1559.8" font-size="28" letter-spacing="-1.203" xml:space="preserve" fill="#dfe1e5" stroke="#dfe1e5" stroke-width="0.4" font-family='"Liberation Mono", monospace'>cloneToWt.sh</text>
<text x="915.6" y="1207.8" font-size="28" letter-spacing="-1.203" xml:space="preserve" fill="#dfe1e5" stroke="#dfe1e5" stroke-width="0.4" font-family='"Liberation Mono", monospace'>execution</text>
<text x="915.6" y="1251.8" font-size="28" letter-spacing="-1.203" xml:space="preserve" fill="#dfe1e5" stroke="#dfe1e5" stroke-width="0.4" font-family='"Liberation Mono", monospace'>fetch-tag.sh</text>
<text x="915.6" y="1295.8" font-size="28" letter-spacing="-1.203" xml:space="preserve" fill="#dfe1e5" stroke="#dfe1e5" stroke-width="0.4" font-family='"Liberation Mono", monospace'>fleet</text>
<text x="915.6" y="1339.8" font-size="28" letter-spacing="-1.203" xml:space="preserve" fill="#dfe1e5" stroke="#dfe1e5" stroke-width="0.4" font-family='"Liberation Mono", monospace'>git-hooks</text>
<text x="915.6" y="1383.8" font-size="28" letter-spacing="-1.203" xml:space="preserve" fill="#dfe1e5" stroke="#dfe1e5" stroke-width="0.4" font-family='"Liberation Mono", monospace'>gitBisect.py</text>
<text x="915.6" y="1427.8" font-size="28" letter-spacing="-1.203" xml:space="preserve" fill="#dfe1e5" stroke="#dfe1e5" stroke-width="0.4" font-family='"Liberation Mono", monospace'>goland</text>
<text x="915.6" y="1471.8" font-size="28" letter-spacing="-1.203" xml:space="preserve" fill="#dfe1e5" stroke="#dfe1e5" stroke-width="0.4" font-family='"Liberation Mono", monospace'>help</text>
<text x="915.6" y="1515.8" font-size="28" letter-spacing="-1.203" xml:space="preserve" fill="#dfe1e5" stroke="#dfe1e5" stroke-width="0.4" font-family='"Liberation Mono", monospace'>idea-tests</text>
<text x="915.6" y="1559.8" font-size="28" letter-spacing="-1.203" xml:space="preserve" fill="#dfe1e5" stroke="#dfe1e5" stroke-width="0.4" font-family='"Liberation Mono", monospace'>intellij.idea.ultimate.main.android.iml</text>
<text x="1663.8" y="1207.8" font-size="28" letter-spacing="-1.203" xml:space="preserve" fill="#dfe1e5" stroke="#dfe1e5" stroke-width="0.4" font-family='"Liberation Mono", monospace'>lightEdit</text>
<text x="1663.8" y="1559.8" font-size="28" letter-spacing="-1.203" xml:space="preserve" fill="#dfe1e5" stroke="#dfe1e5" stroke-width="0.4" font-family='"Liberation Mono", monospace'>refactoring</text>
</g>
<rect x="93" y="1583.2" width="14" height="14" fill="none" rx="3.5" stroke="#548af7" stroke-width="2.4" />
<text x="116.7" y="1599.3" font-size="27" fill="#a8adb5" textLength="71.5" lengthAdjust="spacing" stroke="#a8adb5" stroke-width="0.45" >intellij</text>
<path d="M209.9 1584.2L217.1 1591L209.9 1597.8" stroke="#9094a0" stroke-width="2.1" fill="none" stroke-linecap="round" stroke-linejoin="round" />
<rect x="238.8" y="1583.2" width="14" height="14" fill="none" rx="3.5" stroke="#548af7" stroke-width="2.4" />
<text x="262.7" y="1599.3" font-size="27" fill="#a8adb5" textLength="250" lengthAdjust="spacing" stroke="#a8adb5" stroke-width="0.45" >accurate-math-core</text>
<path d="M534.8 1584.2L542.0 1591L534.8 1597.8" stroke="#9094a0" stroke-width="2.1" fill="none" stroke-linecap="round" stroke-linejoin="round" />
<text x="562.4" y="1599.3" font-size="27" fill="#a8adb5" textLength="37" lengthAdjust="spacing" stroke="#a8adb5" stroke-width="0.45" >src</text>
<path d="M622.1999999999999 1584.2L629.4 1591L622.1999999999999 1597.8" stroke="#9094a0" stroke-width="2.1" fill="none" stroke-linecap="round" stroke-linejoin="round" />
<text x="650.8" y="1599.3" font-size="27" fill="#a8adb5" textLength="57.9" lengthAdjust="spacing" stroke="#a8adb5" stroke-width="0.45" >main</text>
<path d="M730.9 1584.2L738.1 1591L730.9 1597.8" stroke="#9094a0" stroke-width="2.1" fill="none" stroke-linecap="round" stroke-linejoin="round" />
<text x="758" y="1599.3" font-size="27" fill="#a8adb5" textLength="48.8" lengthAdjust="spacing" stroke="#a8adb5" stroke-width="0.45" >java</text>
<path d="M827.8 1584.2L835.0 1591L827.8 1597.8" stroke="#9094a0" stroke-width="2.1" fill="none" stroke-linecap="round" stroke-linejoin="round" />
<text x="856.5" y="1599.3" font-size="27" fill="#a8adb5" textLength="39.2" lengthAdjust="spacing" stroke="#a8adb5" stroke-width="0.45" >org</text>
<path d="M918.3 1584.2L925.5 1591L918.3 1597.8" stroke="#9094a0" stroke-width="2.1" fill="none" stroke-linecap="round" stroke-linejoin="round" />
<text x="946.7" y="1599.3" font-size="27" fill="#a8adb5" textLength="61.4" lengthAdjust="spacing" stroke="#a8adb5" stroke-width="0.45" >math</text>
<path d="M1030.0 1584.2L1037.1999999999998 1591L1030.0 1597.8" stroke="#9094a0" stroke-width="2.1" fill="none" stroke-linecap="round" stroke-linejoin="round" />
<text x="1058.2" y="1599.3" font-size="27" fill="#a8adb5" textLength="54" lengthAdjust="spacing" stroke="#a8adb5" stroke-width="0.45" >core</text>
<path d="M1133.9 1584.2L1141.1 1591L1133.9 1597.8" stroke="#9094a0" stroke-width="2.1" fill="none" stroke-linecap="round" stroke-linejoin="round" />
<circle cx="1178" cy="1590" r="13" fill="#22386a" stroke="#5888f0" stroke-width="1.9" />
<path d="M1182.3 1586.0a5.9 5.9 0 1 0 0 8.0" stroke="#5888f0" stroke-width="1.9" fill="none" stroke-linecap="butt" stroke-linejoin="round" />
<text x="1202.8" y="1599.3" font-size="27" fill="#a8adb5" textLength="174.3" lengthAdjust="spacing" stroke="#a8adb5" stroke-width="0.45" >AccurateMath</text>
<circle cx="2069.8" cy="1590" r="14.5" fill="#23a354" />
<path d="M2062.5 1590.5L2067.8 1596L2078 1584.5" stroke="#1e1f22" stroke-width="3.4" fill="none" stroke-linecap="butt" stroke-linejoin="miter" />
<text x="2091.2" y="1599.3" font-size="27" fill="#a8adb5" textLength="125.6" lengthAdjust="spacing" stroke="#a8adb5" stroke-width="0.45" >Amazon Q</text>
<text x="2251" y="1599.3" font-size="27" fill="#a8adb5" textLength="71.9" lengthAdjust="spacing" stroke="#a8adb5" stroke-width="0.45" >39:34</text>
<text x="2357.5" y="1599.3" font-size="26" fill="#a8adb5" stroke="#a8adb5" stroke-width="0.45" >LF</text>
<text x="2420.3" y="1599.3" font-size="27" fill="#a8adb5" textLength="78.2" lengthAdjust="spacing" stroke="#a8adb5" stroke-width="0.45" >UTF-8</text>
<rect x="2539.5" y="1589.5" width="16.5" height="11.5" fill="none" rx="3" stroke="#ced0d6" stroke-width="2.2" />
<path d="M2551.5 1589V1585a5 5 0 0 1 10 0v1.5" stroke="#ced0d6" stroke-width="2.2" fill="none" stroke-linecap="round" stroke-linejoin="round" />
<path d="M2547.7 1593V1597.5" stroke="#ced0d6" stroke-width="2.2" fill="none" stroke-linecap="butt" stroke-linejoin="round" />
</g>
<g>
<path d="M2128 1538H2164L2148.2 1555a3 3 0 0 1-4.4 0Z" stroke="#27282e" stroke-width="0" fill="#27282e" stroke-linecap="round" stroke-linejoin="round" />
<rect x="1634" y="1220" width="560" height="320" fill="#27282e" rx="18" />
<text x="1666" y="1270.2" font-size="27" fill="#ffffff" textLength="401.5" lengthAdjust="spacing" stroke="#ffffff" stroke-width="1.05" >Amazon Q is now it’s own plugin</text>
<text x="1666" y="1310.2" font-size="27" fill="#c6c9d2" textLength="465.2" lengthAdjust="spacing" stroke="#c6c9d2" stroke-width="0.45" >We’ve auto-installed it for you with all</text>
<text x="1666" y="1342" font-size="27" fill="#c6c9d2" textLength="449" lengthAdjust="spacing" stroke="#c6c9d2" stroke-width="0.45" >the same features and settings from</text>
<text x="1666" y="1374" font-size="27" fill="#c6c9d2" textLength="453.5" lengthAdjust="spacing" stroke="#c6c9d2" stroke-width="0.45" >CodeWhisperer and Amazon Q Chat.</text>
<text x="1666" y="1416.3" font-size="27" fill="#6b9bfa" textLength="132.5" lengthAdjust="spacing" stroke="#6b9bfa" stroke-width="0.45" >Read more</text>
<text x="1820.4" y="1416.3" font-size="27" fill="#6b9bfa" textLength="195.2" lengthAdjust="spacing" stroke="#6b9bfa" stroke-width="0.45" >Manage plugins</text>
<rect x="1666" y="1448" width="144" height="56" fill="#484a57" rx="8" />
<text x="1703.8" y="1485.9" font-size="27" fill="#ffffff" textLength="66.5" lengthAdjust="spacing" stroke="#ffffff" stroke-width="0.45" >Got It</text>
<rect x="1590.3" y="1235.6" width="643.8" height="291.4" fill="none" rx="1.5" stroke="#f08b1e" stroke-width="3" />
</g>
</svg>
</body></html>
